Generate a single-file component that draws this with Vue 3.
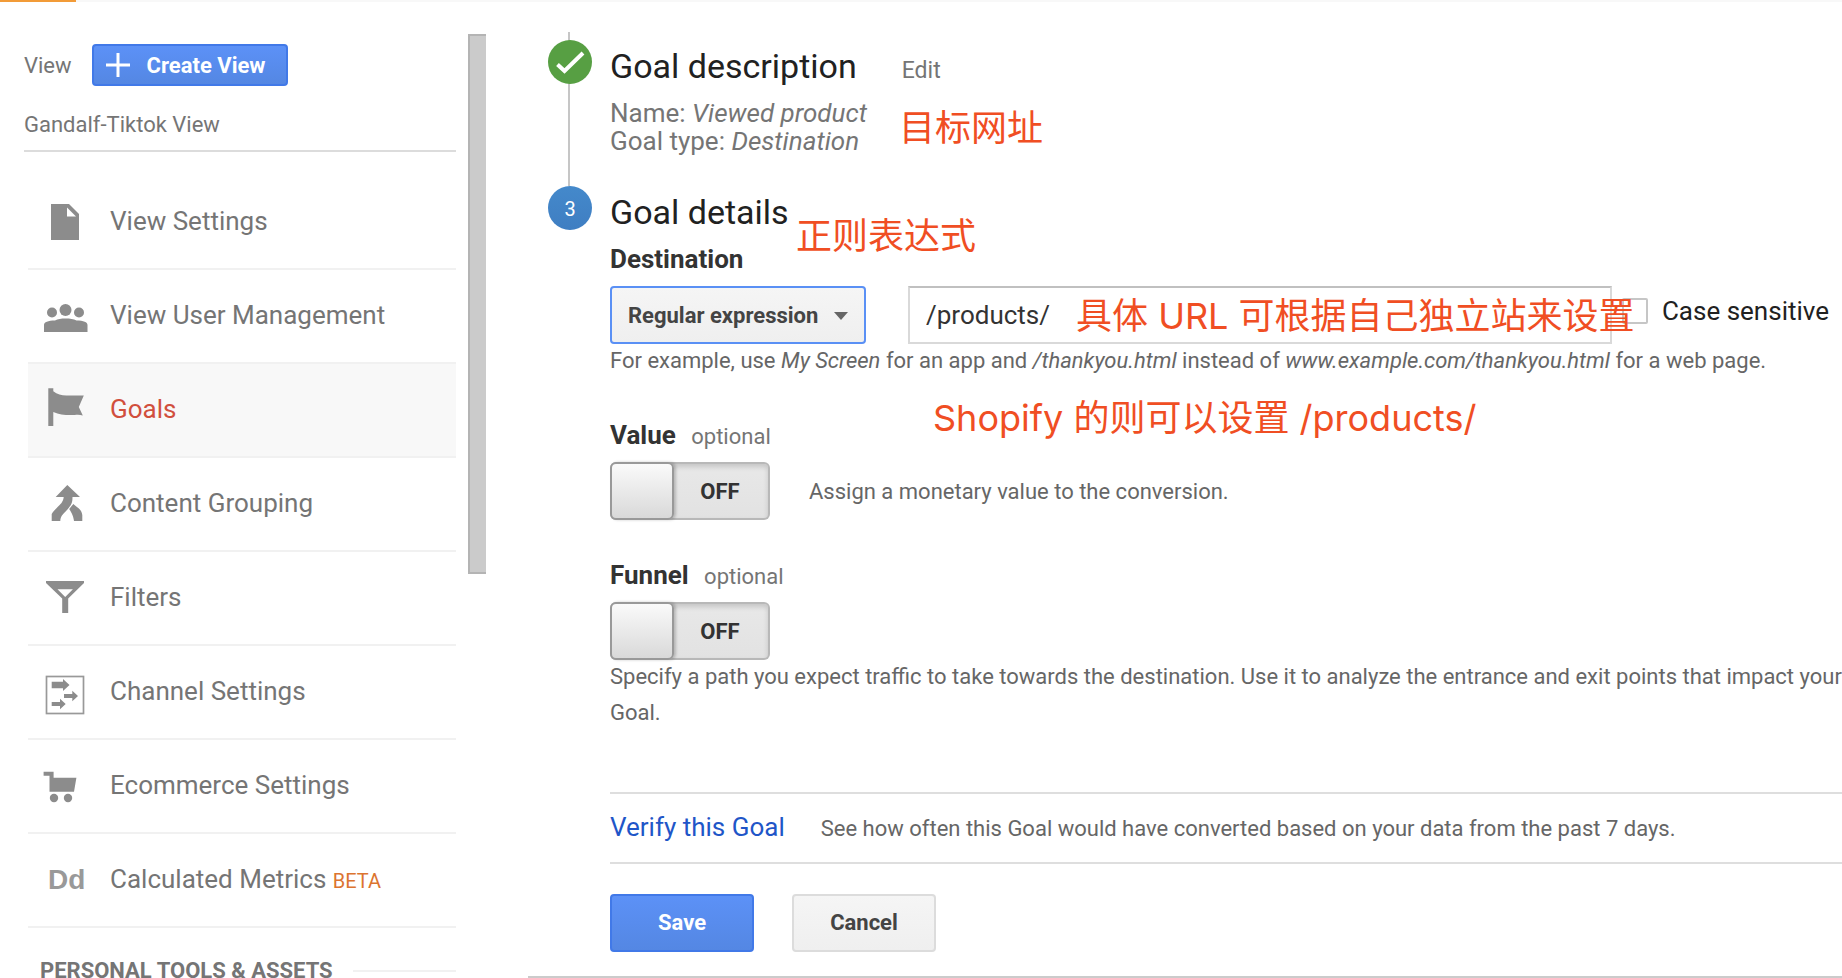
<script setup>
import { ref } from 'vue'

const items = [
  { id: 'doc', label: 'View Settings' },
  { id: 'users', label: 'View User Management' },
  { id: 'flag', label: 'Goals', active: true },
  { id: 'merge', label: 'Content Grouping' },
  { id: 'filter', label: 'Filters' },
  { id: 'channel', label: 'Channel Settings' },
  { id: 'cart', label: 'Ecommerce Settings' },
  { id: 'metrics', label: 'Calculated Metrics', tag: 'BETA' },
]
const match = ref('regex')
const url = ref('/products/')
const caseSensitive = ref(false)
const valueOn = ref(false)
const funnelOn = ref(false)
</script>

<template>
  <div class="page">
    <div class="topbar"><span class="topbar-active"></span></div>
    <div class="body">
      <aside class="sidebar">
        <div class="view-head">
          <span>View</span>
          <button class="btn primary create" type="button">
            <svg width="24" height="24" viewBox="0 0 24 24"><path d="M12 0v24M0 12h24" stroke="#fff" stroke-width="3" /></svg>
            Create View
          </button>
        </div>
        <div class="view-name">Gandalf-Tiktok View</div>
        <nav class="menu">
          <a v-for="item in items" :key="item.id" href="#" class="item" :class="{ active: item.active }">
            <span v-if="item.id === 'metrics'" class="icon dd" aria-hidden="true">Dd</span>
            <svg v-else class="icon" viewBox="0 0 48 48" fill="#8c8c8c" aria-hidden="true">
              <template v-if="item.id === 'doc'">
                <path d="M9 6h18l10 10v26H9z" />
                <path d="M25 9.5v9h9z" fill="#fff" />
              </template>
              <template v-else-if="item.id === 'users'">
                <circle cx="23.5" cy="18" r="6" />
                <circle cx="10" cy="20.5" r="5" />
                <circle cx="37" cy="20.5" r="5" />
                <path d="M2 40v-7c0-3 4-4.500 11-4.500c3-1.500 6-2 10.500-2s8 .5 11 2c7 0 11 1.500 11 4.500v7z" />
              </template>
              <template v-else-if="item.id === 'flag'">
                <path d="M6.300 2.300h5v3c4 3 8 4.200 13 4.200h17.500l-5 11.500l4 8.500c-4-1.500-7-.5-12-.5c-7 0-12-.5-17.500-3v14h-5z" />
              </template>
              <template v-else-if="item.id === 'merge'">
                <path d="M25.300 5L38 17h-7.500c0 6-1 8-6 13.500c-4 4-6 6-6.200 10.500H9.700v-7c1-2 3-4 5-6c4-4 6.500-6 7-11h-8z" />
                <path d="M31.300 24c5 4 8.500 6 9 11v6H32c-.5-4-1.500-7-4.800-12z" />
              </template>
              <template v-else-if="item.id === 'filter'">
                <path fill-rule="evenodd" d="M4 7h38v2L26.200 24.500V39h-6V24.500L4 9zM15.500 15.300l7.700 7.700l7.700-7.700z" />
              </template>
              <template v-else-if="item.id === 'channel'">
                <rect x="4.500" y="8.500" width="37" height="37" fill="none" stroke="#999" stroke-width="1.700" />
                <path d="M9.700 13.700H21V11l6.500 6l-6.500 6v-2.700H9.700zM22 26h8.300v-3.300L36 28l-5.700 5.300V30H22zM9.700 34H18v-3.300l5.700 5.300l-5.700 5.300V38H9.700z" />
              </template>
              <template v-else>
                <path d="M1.600 9.700h10v6h22.800L32 29.700H7.500v-16H1.600z" />
                <circle cx="12" cy="36" r="4.200" />
                <circle cx="26" cy="36" r="4.200" />
              </template>
            </svg>
            <span class="item-label">{{ item.label }} <small v-if="item.tag">{{ item.tag }}</small></span>
          </a>
        </nav>
        <div class="section"><span>PERSONAL TOOLS &amp; ASSETS</span></div>
      </aside>
      <div class="scroll-track"><div class="scroll-thumb"></div></div>

      <main class="main">
        <section class="step first">
          <div class="rail">
            <svg class="badge" viewBox="0 0 44 44">
              <circle cx="22" cy="22" r="22" fill="#579f43" />
              <path d="M9.500 24.500l7 6.500L35 13" fill="none" stroke="#fff" stroke-width="4" />
            </svg>
          </div>
          <div class="content">
            <div class="title-row">
              <h2>Goal description</h2>
              <a href="#" class="edit">Edit</a>
            </div>
            <div class="summary">Name: <em>Viewed product</em></div>
            <div class="summary">Goal type: <em>Destination</em></div>
          </div>
        </section>

        <section class="step">
          <div class="rail"><span class="badge number">3</span></div>
          <div class="content">
            <h2>Goal details</h2>
            <h3 class="dest"><label for="match">Destination</label></h3>
            <div class="fields">
              <div class="select-wrap">
                <select id="match" v-model="match">
                  <option value="equals">Equals to</option>
                  <option value="begins">Begins with</option>
                  <option value="regex">Regular expression</option>
                </select>
              </div>
              <input v-model="url" class="text" type="text" aria-label="Destination URL" />
              <label class="check"><input v-model="caseSensitive" type="checkbox" />Case sensitive</label>
            </div>
            <p class="hint">For example, use <em>My Screen</em> for an app and <em>/thankyou.html</em> instead of <em>www.example.com/thankyou.html</em> for a web page.</p>

            <h3 class="opt">Value <small>optional</small></h3>
            <div class="toggle-row">
              <label class="toggle"><input v-model="valueOn" type="checkbox" aria-label="Value" /><span class="state">{{ valueOn ? 'ON' : 'OFF' }}</span></label>
              <span class="note">Assign a monetary value to the conversion.</span>
            </div>

            <h3 class="opt">Funnel <small>optional</small></h3>
            <div class="toggle-row">
              <label class="toggle"><input v-model="funnelOn" type="checkbox" aria-label="Funnel" /><span class="state">{{ funnelOn ? 'ON' : 'OFF' }}</span></label>
            </div>
            <p class="hint">Specify a path you expect traffic to take towards the destination. Use it to analyze the entrance and exit points that impact your Goal.</p>

            <div class="verify">
              <a href="#">Verify this Goal</a>
              <span class="note">See how often this Goal would have converted based on your data from the past 7 days.</span>
            </div>
            <div class="actions">
              <button class="btn primary" type="button">Save</button>
              <button class="btn plain" type="button">Cancel</button>
            </div>
          </div>
        </section>

        <span class="mark mark-url">目标网址</span>
        <span class="mark mark-regex">正则表达式</span>
        <span class="mark mark-custom">具体 URL 可根据自己独立站来设置</span>
        <span class="mark mark-shopify">Shopify 的则可以设置 /products/</span>
      </main>
    </div>
  </div>
</template>

<style>
body {
  margin: 0;
  background: #fff;
}
</style>

<style scoped>
* {
  box-sizing: border-box;
}
.page {
  height: 100vh;
  overflow: hidden;
  font-family: Roboto, "Noto Sans CJK SC", sans-serif;
  font-size: 22px;
  color: #757575;
}
a {
  color: inherit;
  text-decoration: none;
}
h2,
h3,
p {
  margin: 0;
}
.topbar {
  height: 2px;
  background: #f8f8f8;
}
.topbar-active {
  display: block;
  width: 76px;
  height: 2px;
  background: #f29b38;
}
.body {
  display: flex;
}

.sidebar {
  flex: 0 0 456px;
  padding: 42px 0 0 24px;
}
.view-head {
  display: flex;
  align-items: center;
  gap: 20px;
}
.btn {
  display: flex;
  align-items: center;
  justify-content: center;
  width: 144px;
  height: 58px;
  padding: 0 0 2px;
  border: 2px solid #dcdcdc;
  border-radius: 4px;
  font-family: inherit;
  font-size: 22px;
  font-weight: 700;
}
.primary {
  border-color: #4179e8;
  background: linear-gradient(#5c91f7, #5487e3);
  color: #fff;
}
.plain {
  background: linear-gradient(#f5f5f5, #efefef);
  color: #444;
}
.create {
  justify-content: flex-start;
  gap: 17px;
  width: 196px;
  height: 42px;
  padding: 0 0 0 12px;
}
.view-name {
  padding: 23px 0 9px;
  border-bottom: 2px solid #dcdcdc;
  line-height: 32px;
}
.menu {
  padding: 24px 0 0 4px;
}
.item {
  display: flex;
  align-items: center;
  gap: 20px;
  height: 94px;
  padding-left: 14px;
  border-bottom: 2px solid #f1f1f1;
  font-size: 26px;
}
.item-label {
  padding-bottom: 2px;
}
.item small {
  font-size: 20px;
  color: #dc7430;
}
.item.active {
  background: #f8f8f8;
  color: #d14f3d;
}
.icon {
  flex: none;
  width: 48px;
  height: 48px;
}
.dd {
  padding-left: 6px;
  font-family: "Liberation Sans", Arial, sans-serif;
  font-size: 28px;
  font-weight: 700;
  line-height: 48px;
  color: #999;
}
.section {
  display: flex;
  align-items: center;
  gap: 20px;
  padding: 27px 0 0 16px;
  font-weight: 700;
  line-height: 32px;
}
.section::after {
  content: "";
  flex: 1;
  height: 2px;
  background: #f1f1f1;
}
.scroll-track {
  flex: 0 0 72px;
  padding: 32px 0 0 12px;
}
.scroll-thumb {
  width: 18px;
  height: 540px;
  border: solid #b4b4b4;
  border-width: 2px 0 2px 2px;
  background: #cbcbcb;
}

.main {
  position: relative;
  flex: 1;
  min-width: 0;
  padding-top: 30px;
}
.step {
  display: grid;
  grid-template-columns: 82px minmax(0, 1fr);
}
.step:last-of-type {
  border-bottom: 2px solid #cbcbcb;
}
.rail {
  padding-left: 20px;
}
.first .rail {
  padding-top: 8px;
  background: linear-gradient(#c6c6c6, #c6c6c6) 40px 0 / 2px 100% no-repeat;
}
.badge {
  display: block;
  width: 44px;
  height: 44px;
}
.number {
  border-radius: 50%;
  background: linear-gradient(#4489cb, #3f7ec2);
  color: #fff;
  font-size: 20px;
  line-height: 46px;
  text-align: center;
}
.first .content {
  padding: 14px 0 31px;
}
.step:not(.first) .content {
  padding-top: 6px;
}
.title-row {
  display: flex;
  align-items: baseline;
  gap: 45px;
  margin-bottom: 13px;
}
h2 {
  font-size: 34px;
  font-weight: 400;
  line-height: 40px;
  color: #212121;
}
.edit {
  font-size: 23px;
}
.summary {
  font-size: 26px;
  line-height: 28px;
}
h3 {
  font-size: 26px;
  font-weight: 700;
  line-height: 32px;
  color: #333;
}
h3 small {
  margin-left: 9px;
  font-size: 22px;
  font-weight: 400;
  line-height: 1;
  color: #757575;
}
.dest {
  margin: 11px 0;
}
.fields {
  display: flex;
  padding-right: 13px;
}
.select-wrap {
  position: relative;
  flex: 0 0 256px;
  margin-right: 42px;
}
.select-wrap::after {
  content: "";
  position: absolute;
  top: 26px;
  right: 18px;
  border: solid transparent;
  border-width: 8px 7px 0;
  border-top-color: #666;
  pointer-events: none;
}
select {
  appearance: none;
  width: 100%;
  height: 58px;
  padding: 0 16px;
  border: 2px solid #5a90f5;
  border-radius: 4px;
  background: linear-gradient(#f5f5f5, #efefef);
  color: #444;
  font-family: inherit;
  font-size: 22px;
  font-weight: 700;
}
.text {
  flex: 1;
  min-width: 0;
  height: 58px;
  padding: 0 16px;
  border: 2px solid #d9d9d9;
  border-top-color: #c0c0c0;
  color: #333;
  font-family: inherit;
  font-size: 26px;
}
.check {
  display: flex;
  align-items: center;
  height: 50px;
  margin-left: 10px;
  color: #212121;
  font-size: 26px;
}
.check input {
  appearance: none;
  width: 26px;
  height: 26px;
  margin: 0 14px 0 0;
  border: 2px solid #c6c6c6;
  border-radius: 2px;
  background: #fff;
}
.hint {
  margin-top: -1px;
  padding-bottom: 1px;
  line-height: 36px;
  color: #666;
}
.note {
  color: #666;
}
.opt {
  margin: 39px 0 11px;
}
.toggle-row {
  display: flex;
  align-items: center;
  gap: 39px;
}
.toggle {
  display: flex;
  align-items: center;
  width: 160px;
  height: 58px;
  border: 2px solid #b8b8b8;
  border-left: 0;
  border-radius: 6px;
  background: linear-gradient(#e8e8e8, #e2e2e2);
  box-shadow: inset 0 3px 5px rgba(0, 0, 0, 0.15);
  color: #333;
  font-weight: 700;
}
.toggle input {
  appearance: none;
  flex: none;
  width: 64px;
  height: 58px;
  margin: 0;
  border: 2px solid #999;
  border-radius: 6px;
  background: linear-gradient(#fafafa, #d9d9d9);
  box-shadow: 2px 0 3px rgba(0, 0, 0, 0.2);
}
.state {
  flex: 1;
  padding-right: 2px;
  text-align: center;
}
.verify {
  display: flex;
  align-items: baseline;
  gap: 36px;
  margin-top: 60px;
  padding: 17px 0;
  border: solid #dedede;
  border-width: 2px 0;
  line-height: 32px;
}
.verify a {
  font-size: 26px;
  color: #1f56c8;
}
.actions {
  display: flex;
  gap: 38px;
  padding: 30px 0 24px;
}

.mark {
  position: absolute;
  font-family: Inter, "Noto Sans CJK SC", sans-serif;
  font-size: 36px;
  font-weight: 400;
  line-height: 44px;
  color: #f04e23;
  white-space: nowrap;
  pointer-events: none;
}
.mark-url {
  top: 104px;
  left: 371px;
}
.mark-regex {
  top: 212px;
  left: 268px;
}
.mark-custom {
  top: 292px;
  left: 548px;
}
.mark-shopify {
  top: 394px;
  left: 405px;
}
</style>
